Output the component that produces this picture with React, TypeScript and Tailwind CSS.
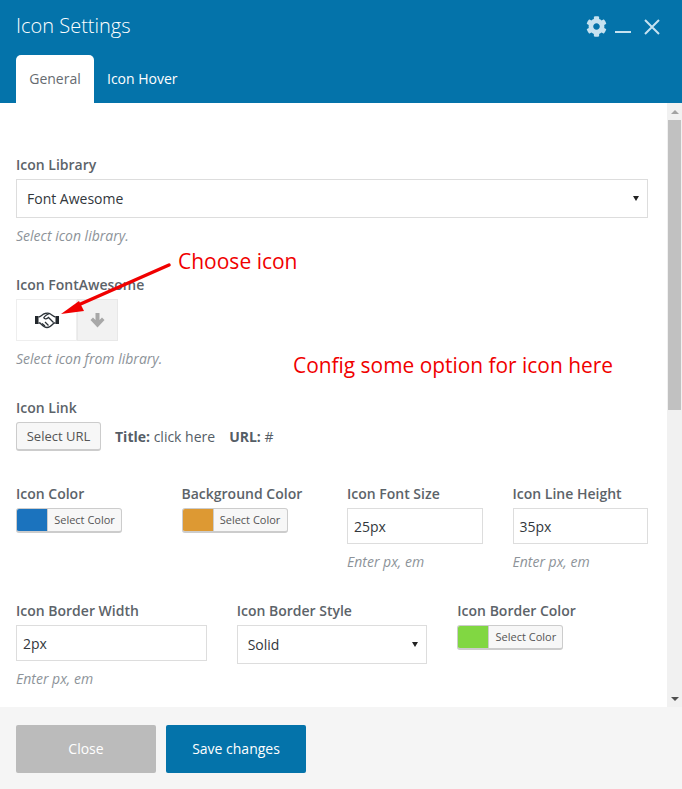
import { FaCog } from 'react-icons/fa';

const Label = ({ children }: { children: string }) => (
  <div className="text-[14px] leading-[20px] font-semibold text-[#5c6369] mb-1">{children}</div>
);

const Help = ({ children }: { children: string }) => (
  <div className="mt-[8px] text-[14px] leading-[20px] italic text-[#8d9399]">{children}</div>
);

const Input = ({ value }: { value: string }) => (
  <div className="h-[36px] border border-[#dddddd] bg-white px-[6px] flex items-center text-[14px] text-[#32373c]">{value}</div>
);

const ColorPick = ({ color }: { color: string }) => (
  <div className="flex w-[106px] h-[25px] rounded-[3px] border border-[#cccccc] border-b-2 overflow-hidden bg-[#f7f7f7]">
    <div className="w-[30px] shrink-0" style={{ background: color }} />
    <div className="flex-1 flex items-center justify-center text-[11px] text-[#555555] border-l border-[#cccccc]">Select Color</div>
  </div>
);

const Caret = () => (
  <div className="w-0 h-0 border-x-[3.5px] border-x-transparent border-t-[5px] border-t-[#222222]" />
);

export default function App() {
  return (
    <div className="relative w-[682px] h-[789px] overflow-hidden bg-white flex flex-col font-['Open_Sans',sans-serif]">
      <header className="h-[103px] shrink-0 bg-[#0473aa] flex flex-col justify-between">
        <div className="flex items-start justify-between pt-[11px] pl-4 pr-[21px]">
          <h1 className="text-[20px] leading-[30px] font-light text-white">Icon Settings</h1>
          <div className="flex items-center text-[#c6e2f0] mt-[5px]">
            <FaCog size={21} />
            <div className="w-[16px] h-[2px] bg-[#c6e2f0] ml-[8px] mt-[11px]" />
            <svg width="18" height="18" viewBox="0 0 18 18" className="ml-[12px]" stroke="#c6e2f0" strokeWidth="2" fill="none">
              <path d="M2 2 L16 16 M16 2 L2 16" />
            </svg>
          </div>
        </div>
        <div className="flex pl-4 text-[14px]">
          <div className="h-[48px] w-[78px] pb-[2px] rounded-t-[5px] bg-white text-[#666b70] flex items-center justify-center">General</div>
          <div className="h-[48px] pb-[2px] px-[13px] text-white font-medium flex items-center">Icon Hover</div>
        </div>
      </header>

      <main className="flex-1 flex min-h-0">
        <div className="flex-1 pl-4 pr-[19px] pt-[52px]">
          <Label>Icon Library</Label>
          <div className="h-[39px] border border-[#dddddd] pl-[10px] pr-[8px] flex items-center justify-between text-[14px] text-[#32373c]">
            <span>Font Awesome</span>
            <Caret />
          </div>
          <Help>Select icon library.</Help>

          <div className="mt-[29px]">
            <Label>Icon FontAwesome</Label>
            <div className="flex h-[42px] w-[102px]">
              <div className="w-[61px] border border-[#eeeeee] flex items-center justify-center">
                <svg width="24" height="17" viewBox="0 0 24 17" fill="none">
                  <path d="M0 4 H3.5 V12 H0 Z M20.5 4 H24 V12 H20.5 Z" fill="#23282d" />
                  <path d="M3.5 5 C6 5 7 2 10 1.5 C12 1 14 1 15.5 2 C17 3 18.5 5 20.5 5 M3.5 11 H5 C7 13 9 15.5 12 15.5 C15 15.5 17 13 19 11 H20.5" stroke="#2b3238" strokeWidth="1.3" />
                  <path d="M14.5 1.5 C12 2.5 9.5 4 8.8 5.8 C9.5 7.5 12 7 13.5 5.5 L18.5 10.5 M7 11.5 L10 14 M10 10 L13.5 13.5" stroke="#2b3238" strokeWidth="1.3" />
                </svg>
              </div>
              <div className="flex-1 bg-[#f2f2f2] border border-[#e8e8e8] flex items-center justify-center">
                <svg width="15" height="15" viewBox="0 0 15 15" fill="#a8a8a8">
                  <path d="M5.5 0 H9.5 V7 L12 4.5 L14.5 7 L7.5 14.5 L0.5 7 L3 4.5 L5.5 7 Z" />
                </svg>
              </div>
            </div>
            <Help>Select icon from library.</Help>
          </div>

          <div className="mt-[29px]">
            <Label>Icon Link</Label>
            <div className="flex items-center text-[14px] text-[#555d66]">
              <div className="h-[29px] w-[85px] pt-[2px] rounded-[3px] border border-[#cccccc] border-b-2 bg-[#f7f7f7] flex items-center justify-center text-[13px] text-[#555555]">Select URL</div>
              <span className="ml-[14px]"><b className="font-bold">Title:</b> click here</span>
              <span className="ml-[14px]"><b className="font-bold">URL:</b> #</span>
            </div>
          </div>

          <div className="mt-[33px] grid grid-cols-4 gap-x-[30px]">
            <div>
              <Label>Icon Color</Label>
              <ColorPick color="#1b73be" />
            </div>
            <div>
              <Label>Background Color</Label>
              <ColorPick color="#dd9933" />
            </div>
            <div>
              <Label>Icon Font Size</Label>
              <Input value="25px" />
              <Help>Enter px, em</Help>
            </div>
            <div>
              <Label>Icon Line Height</Label>
              <Input value="35px" />
              <Help>Enter px, em</Help>
            </div>
          </div>

          <div className="mt-[29px] grid grid-cols-3 gap-x-[30px]">
            <div>
              <Label>Icon Border Width</Label>
              <Input value="2px" />
              <Help>Enter px, em</Help>
            </div>
            <div>
              <Label>Icon Border Style</Label>
              <div className="h-[39px] border border-[#dddddd] pl-[10px] pr-[8px] flex items-center justify-between text-[14px] text-[#32373c]">
                <span>Solid</span>
                <Caret />
              </div>
            </div>
            <div>
              <Label>Icon Border Color</Label>
              <ColorPick color="#81d742" />
            </div>
          </div>
        </div>

        <div className="w-[15px] shrink-0 bg-[#f1f1f1] flex flex-col items-center">
          <div className="h-[17px] flex items-center justify-center">
            <div className="w-0 h-0 border-x-[4px] border-x-transparent border-b-[4px] border-b-[#a3a3a3]" />
          </div>
          <div className="w-[13px] h-[290px] bg-[#c1c1c1]" />
          <div className="flex-1" />
          <div className="h-[17px] flex items-center justify-center">
            <div className="w-0 h-0 border-x-[4px] border-x-transparent border-t-[4px] border-t-[#505050]" />
          </div>
        </div>
      </main>

      <footer className="h-[82px] shrink-0 bg-[#f5f5f5] flex items-start gap-[10px] pl-4 pt-[18px] text-[14px]">
        <div className="w-[140px] h-[48px] pb-[2px] rounded-[2px] bg-[#bbbbbb] text-white flex items-center justify-center">Close</div>
        <div className="w-[140px] h-[48px] pb-[2px] rounded-[2px] bg-[#0473aa] text-white font-medium flex items-center justify-center">Save changes</div>
      </footer>

      <div className="absolute left-[178px] top-[247px] text-[21px] leading-[28px] text-[#f00000]">Choose icon</div>
      <div className="absolute left-[293px] top-[351px] text-[20.9px] leading-[28px] text-[#f00000]">Config some option for icon here</div>
      <svg className="absolute left-0 top-0 pointer-events-none" width="682" height="789" fill="none">
        <path d="M169 265 L76 306" stroke="#f00000" strokeWidth="3.5" strokeLinecap="round" />
        <path d="M61 314 L79 301 L84 311 Z" fill="#f00000" />
      </svg>
    </div>
  );
}
